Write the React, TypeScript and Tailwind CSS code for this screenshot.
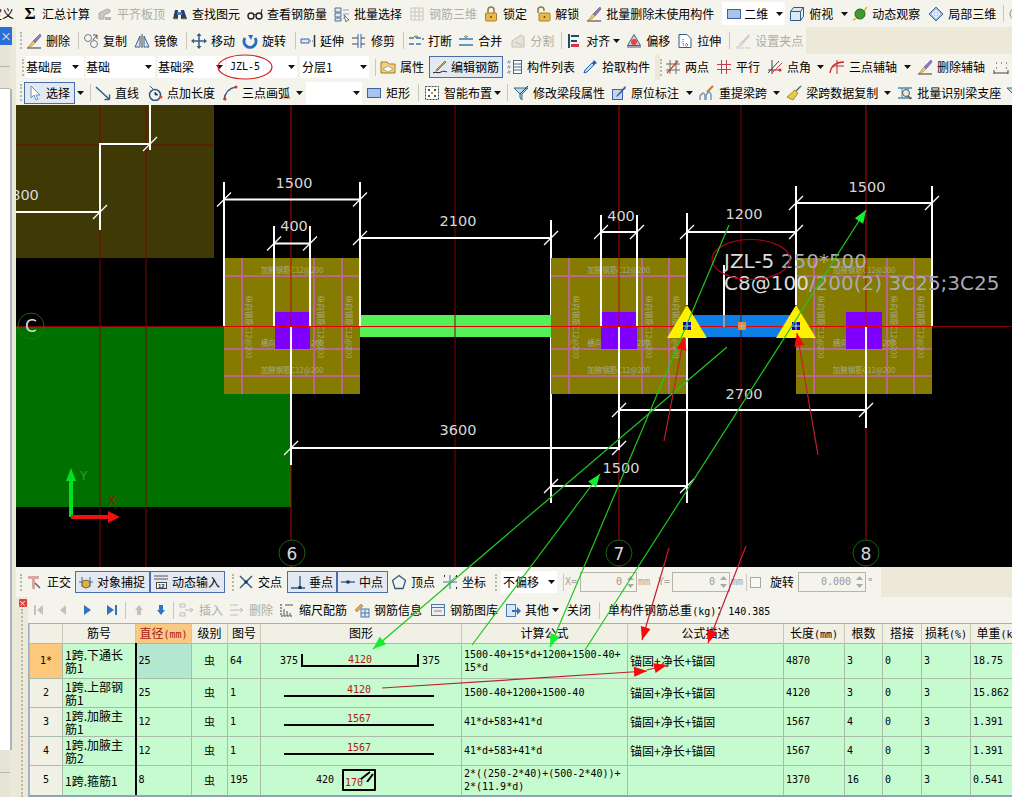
import type { ReactNode } from "react";
import clsx from "clsx";

const Ic = ({ children, w = 16 }: { children: ReactNode; w?: number }) => (
  <svg width={w} height={16} viewBox={`0 0 ${w} 16`} className="shrink-0 block">
    {children}
  </svg>
);

// toolbar icons
const icons: Record<string, ReactNode> = {
  sigma: <span className="block w-4 text-center font-['Liberation_Serif',serif] text-[17px] font-bold leading-4">Σ</span>,
  flat: <Ic><path d="M2 13V7l8-4 3 1v2l-6 3v4z" fill="#c9c9c0" stroke="#a8a89c" /><path d="M8 14h6v-3H8z" fill="#b5b5aa" /></Ic>,
  find: <Ic><path d="M1 13l2-9h3v9zM9 13V4h3l3 9z" fill="#27406e" /><path d="M5 6h5v3H5z" fill="#5579b5" /><path d="M2 13h4M10 13h4" stroke="#c9a227" /></Ic>,
  glasses: <Ic><circle cx="4" cy="10" r="3" fill="none" stroke="#222" strokeWidth="1.4" /><circle cx="12" cy="10" r="3" fill="none" stroke="#222" strokeWidth="1.4" /><path d="M7 9c1-1 1-1 2 0M14 9l1-6" stroke="#222" fill="none" /></Ic>,
  batch: <Ic><path d="M1 2h6v4H1zM1 7h6v4H1zM1 12h6v3H1z" fill="#dfe7f4" stroke="#54708f" /><path d="M9 4h6M9 8h6M9 12h3" stroke="#8fa2b8" /><path d="M10 9l5 5-2 .3-1 1.7z" fill="#fff" stroke="#444" strokeWidth=".7" /></Ic>,
  grid: <Ic><path d="M2 2h12v12H2zM6 2v12M10 2v12M2 6h12M2 10h12" fill="none" stroke="#c6c6ba" /></Ic>,
  lock: <Ic><path d="M5 7V4a3 3 0 0 1 6 0v3" fill="none" stroke="#8a7a4a" strokeWidth="1.5" /><rect x="2.5" y="7" width="11" height="8" rx="1" fill="#e9b949" stroke="#a8802a" /><path d="M8 10v2" stroke="#6a4a10" strokeWidth="1.5" /></Ic>,
  unlock: <Ic><path d="M3 7V4a3 3 0 0 1 6 0v1" fill="none" stroke="#8a7a4a" strokeWidth="1.5" /><rect x="4" y="7" width="11" height="8" rx="1" fill="#e9b949" stroke="#a8802a" /><path d="M9.5 10v2" stroke="#6a4a10" strokeWidth="1.5" /></Ic>,
  brush: <Ic><path d="M14 1L7 8l2 2 6-7z" fill="#8c7ac4" stroke="#5c4a94" strokeWidth=".6" /><path d="M7 8l2 2-3 3-4 1c2-1 2-3 5-6z" fill="#e8c95c" stroke="#a08020" strokeWidth=".5" /><path d="M1 15h14" stroke="#333" /></Ic>,
  brushGrey: <Ic><path d="M14 1L7 8l2 2 6-7z" fill="#cfcfc6" /><path d="M7 8l2 2-3 3-4 1c2-1 2-3 5-6z" fill="#deded5" stroke="#bbb" strokeWidth=".5" /><path d="M1 15h14" stroke="#bbb" strokeDasharray="2 1" /></Ic>,
  plane: <Ic><rect x="1.500" y="3.500" width="13" height="9" fill="#a9c3ea" stroke="#3a62a8" /></Ic>,
  cube: <Ic><path d="M1.500 5.500h10v9h-10zM1.500 5.500l3-4h10l-3 4M11.500 14.500l3-4v-9" fill="#dbe9f5" stroke="#2f5c80" /></Ic>,
  orbit: <Ic><path d="M1 14c3-1 11-8 14-13" stroke="#d9b92a" strokeWidth="1.5" fill="none" /><circle cx="8" cy="8" r="5" fill="#3f9a36" stroke="#1f6a20" /></Ic>,
  local: <Ic><path d="M8 1l7 7-7 7-7-7z" fill="#9dbbe0" stroke="#466c9c" /><path d="M4 8l4-4 4 4-4 4zM8 4v8M4 8h8" fill="none" stroke="#fff" /></Ic>,
  circle: <Ic><circle cx="8" cy="8" r="6" fill="none" stroke="#888" /><path d="M8 4v8M4 8h8" stroke="#888" /></Ic>,
  copy: <Ic><circle cx="5" cy="5" r="3.500" fill="none" stroke="#6a7f96" /><circle cx="11" cy="11" r="3.500" fill="none" stroke="#6a7f96" /><path d="M10 2l4 0 0 4M10 7l4-5" stroke="#555" fill="none" /></Ic>,
  mirror: <Ic><path d="M8 1v14" stroke="#444" /><path d="M6 3v11H1zM10 3v11h5z" fill="#dfe7f2" stroke="#3d5f8d" /></Ic>,
  move: <Ic><path d="M8 1v14M1 8h14" stroke="#345d8c" strokeWidth="1.500" /><path d="M8 0l2.500 3h-5zM8 16l2.500-3h-5zM0 8l3-2.500v5zM16 8l-3-2.500v5z" fill="#345d8c" /></Ic>,
  rotate: <Ic><path d="M3 5a6 6 0 1 0 10 0" fill="none" stroke="#2c6bc0" strokeWidth="3" /><path d="M6 2l5 0-2 5z" fill="#2c6bc0" /></Ic>,
  extend: <Ic><path d="M1 6h8v4H1z" fill="#dbe7f5" stroke="#3a62a8" /><path d="M10 8h3" stroke="#3a62a8" strokeDasharray="1 1" /><path d="M14.500 2v12" stroke="#333" strokeWidth="1.500" /></Ic>,
  trim: <Ic><path d="M7 1v14M10 1v14" stroke="#3a62a8" /><path d="M1 5h6M1 11h6M10 5h4M10 11h4" stroke="#444" /></Ic>,
  breakIc: <Ic><path d="M1 5h14v2M1 11h14" fill="none" stroke="#3a78a8" strokeWidth="1.500" strokeDasharray="5 2" /><path d="M8 2v3M6 3l2 2 2-2" stroke="#8a7a30" fill="none" /></Ic>,
  merge: <Ic><path d="M1 6h14M1 12h14" stroke="#3a78a8" strokeWidth="1.500" /><path d="M8 2v3M6 3l2 2 2-2" stroke="#888" fill="none" /></Ic>,
  split: <Ic><path d="M2 14V8l9-6 3 2v10z" fill="#e4e4da" stroke="#c2c2b6" /><path d="M5 9l7 3" stroke="#c2c2b6" /></Ic>,
  align: <Ic><path d="M3 1v14" stroke="#26476e" strokeWidth="2" /><path d="M5 3h8M5 8h6" stroke="#26476e" strokeWidth="2" /><path d="M5 11h8v3H5z" fill="#d8334a" /></Ic>,
  offset: <Ic><path d="M8 1.500l6.500 11h-13z" fill="#f2c4c4" stroke="#3d5f8d" /><circle cx="8" cy="9" r="3" fill="#d84a4a" /><path d="M1 14h14" stroke="#3d5f8d" /></Ic>,
  stretch: <Ic><path d="M2 1.500h8l4 4v9H2z" fill="#fff" stroke="#2f5c80" /><path d="M6 6v6M6 12h5M9 10l2 2-2 2" stroke="#2f5c80" fill="none" strokeDasharray="1 1" /></Ic>,
  props: <Ic><path d="M1 3h6l2 2h6v9H1z" fill="#f0d27a" stroke="#a87820" /><path d="M3 10l5-3 5 3-5 3z" fill="#fff" stroke="#666" strokeWidth=".5" /></Ic>,
  pen: <Ic><path d="M13 2L5 10l-1 2 2-1 8-8z" fill="#c8a84a" stroke="#5c4a20" strokeWidth=".6" /><path d="M1 14c3-2 5 1 8-1 2-1 4-1 6 0" stroke="#222" fill="none" /></Ic>,
  list: <Ic><path d="M1 2h2v2H1zM1 7h2v2H1zM1 12h2v2H1z" fill="none" stroke="#4a6a8a" strokeDasharray="1 1" /><rect x="6.500" y="1.500" width="8" height="13" fill="#fff" stroke="#4a6a8a" /><path d="M7 5h7M7 8h7M7 11h7" stroke="#4a6a8a" /></Ic>,
  dropper: <Ic><path d="M2 14l1-3 7-7 2 2-7 7z" fill="#bcd9f5" stroke="#2862a8" /><path d="M10 4l2-3 3 3-3 2z" fill="#2862a8" /></Ic>,
  twoPt: <Ic><path d="M1 5h14M1 11h14M5 1v14M11 1v14" stroke="#6a6a6a" /><path d="M2 14L13 2" stroke="#c83a2a" strokeWidth="1.200" /></Ic>,
  parallel: <Ic><path d="M1 5.500h14M1 10.500h14M5.500 1v14M10.500 1v14" stroke="#c83a4a" /></Ic>,
  angle: <Ic><path d="M1 11h11M5 1v14M1 14L12 2" stroke="#444" /><path d="M5 14L15 4" stroke="#c83a4a" /><circle cx="13" cy="11" r="1.500" fill="#d8212a" /></Ic>,
  arcAxis: <Ic><path d="M1 14C2 7 7 3 15 3" fill="none" stroke="#c82a2a" strokeWidth="1.300" /><path d="M8 1v14M4 7h11" stroke="#c82a2a" /></Ic>,
  dim: <Ic><path d="M1 14h14M1 11v4M15 11v4" stroke="#444" /><path d="M3 4h1M8 4h1M13 4h1M3 9h1M13 9h1" stroke="#333" /></Ic>,
  cursor: <Ic><path d="M4 1v12l3-3 2 5 2-1-2-4h4z" fill="#fff" stroke="#6a8fb5" /></Ic>,
  line: <Ic><path d="M1 2l13 12" stroke="#2f5c80" strokeWidth="1.500" /><path d="M14.500 14.500v-5M14.500 14.500h-5" stroke="#2f5c80" strokeWidth="1.500" /></Ic>,
  ptLen: <Ic><circle cx="8" cy="10" r="5.500" fill="none" stroke="#2f5c80" strokeWidth="1.500" /><path d="M8 7v3h3M3 1l3 3" stroke="#2f5c80" /><circle cx="14" cy="12" r="1.500" fill="#d84a2a" /></Ic>,
  arc: <Ic><path d="M2 15C3 8 7 3 14 2" fill="none" stroke="#2f5c80" strokeWidth="1.500" /><circle cx="14" cy="2" r="1.500" fill="#c83a2a" /><circle cx="3" cy="14" r="1.500" fill="#c83a2a" /></Ic>,
  smart: <Ic><rect x="1.500" y="1.500" width="13" height="13" fill="#fff" stroke="#444" strokeDasharray="2 1" /><path d="M4 4h2v2H4zM10 4h2v2h-2zM4 10h2v2H4zM10 10h2v2h-2z" fill="#2a6a40" /><path d="M7 7h2v2H7z" fill="#c8901a" /></Ic>,
  funnel: <Ic><path d="M1 3h14L9 9v6l-2-2V9z" fill="#bcd9e8" stroke="#2f6c80" /><path d="M15 1L7 9" stroke="#333" /></Ic>,
  edit: <Ic><rect x="1.500" y="4.500" width="10" height="10" fill="#c7d6ee" stroke="#3a62a8" /><path d="M14 1L6 10l-1 2 2-1 8-8z" fill="#3a62a8" /></Ic>,
  span: <Ic><path d="M1 15V11c3-4 4-4 5 0v4M7 15V10c3-4 4-4 5 0v5" fill="none" stroke="#7a9ac0" strokeWidth="1.500" /><path d="M14 1L8 7" stroke="#c87a2a" strokeWidth="2" /></Ic>,
  broom: <Ic><path d="M15 1L9 7" stroke="#666" strokeWidth="1.500" /><path d="M9 5l3 3-5 7-6-3z" fill="#eccb4a" stroke="#a88820" /></Ic>,
  batchId: <Ic><path d="M1 3h14M1 13h14" stroke="#4a8ab8" strokeWidth="1.500" /><path d="M5 3v10M11 3v10" stroke="#4a8ab8" /><circle cx="9" cy="8" r="3.500" fill="#e8e8d8" stroke="#555" /><path d="M11 11l3 3" stroke="#555" strokeWidth="1.500" /></Ic>,
  ortho: <Ic><path d="M1 2h11v3H8v10H5V5H1z" fill="#d8a8a0" /><path d="M8 9l5 5" stroke="#667" strokeWidth="1.500" /></Ic>,
  snap: <Ic><path d="M1 8h3M12 8h3M4 3v10M12 3v10" stroke="#3a62a8" /><circle cx="8" cy="10" r="4" fill="#d8b34a" stroke="#8a6a1a" /></Ic>,
  dyn: <Ic><path d="M1 2h14M1 5h14" stroke="#555" /><rect x="3.500" y="8.500" width="10" height="6" fill="#fff" stroke="#444" /><text x="5" y="14" fontSize="6" fontFamily="Liberation Sans" fontWeight="700" fill="#222">12</text></Ic>,
  cross: <Ic><path d="M2 2l12 12M14 2L2 14" stroke="#345d8c" strokeWidth="1.500" /><path d="M6 8l2-2 2 2-2 2z" fill="#14305c" /></Ic>,
  perp: <Ic><path d="M1 14h14M10 2v12" stroke="#2f5c80" strokeWidth="1.300" /><rect x="8.500" y="12" width="3" height="3" fill="#14305c" /></Ic>,
  mid: <Ic><path d="M1 8h14" stroke="#2f5c80" strokeWidth="1.300" /><rect x="6.500" y="6.500" width="3" height="3" fill="#14305c" /></Ic>,
  vertex: <Ic><path d="M8 1.500l6.500 5-2.500 8H4l-2.500-8z" fill="none" stroke="#2f5c80" strokeWidth="1.300" /></Ic>,
  coord: <Ic><path d="M8 1v14M1 8h14" stroke="#3a78a8" /><path d="M2 14L14 2" stroke="#c8a02a" /><path d="M2 2h1M14 14h1M2 14h1M14 2h1" stroke="#222" strokeWidth="2" /></Ic>,
  insert: <Ic><path d="M1 2h5v3H1zM1 11h5v3H1zM6 8h8M11 6l3 2-3 2" fill="none" stroke="#bdbdb2" /></Ic>,
  remove: <Ic><path d="M1 3h8M1 8h8M1 13h8M9 8h5M11 6l3 2-3 2" fill="none" stroke="#bdbdb2" /></Ic>,
  scale: <Ic><path d="M2 2v12h12" fill="none" stroke="#333" strokeDasharray="2 1" /><path d="M5 14V7M8 14V9M11 14v-3M6 3h8" stroke="#555" /></Ic>,
  info: <Ic><path d="M1 8l6-6 2 2-6 6z" fill="#d8a85a" stroke="#8a6a2a" strokeWidth=".5" /><rect x="7" y="7" width="8" height="8" fill="#dbe7f5" stroke="#4a7aaa" /><path d="M11 7v8M7 11h8" stroke="#4a7aaa" /></Ic>,
  lib: <Ic><rect x="1.500" y="2.500" width="13" height="11" fill="#e8f0fa" stroke="#4a7aaa" /><path d="M1 5.500h14" stroke="#4a7aaa" /><path d="M4 9h8" stroke="#c8752a" /></Ic>,
  other: <Ic><rect x="1.500" y="2.500" width="9" height="12" fill="#dbe7f5" stroke="#4a7aaa" /><path d="M7 8h5V5l4 4-4 4v-3H7z" fill="#2f74c0" /></Ic>,
};

const Arrow = ({ className }: { className?: string }) => (
  <svg width="7" height="4" viewBox="0 0 7 4" className={clsx("shrink-0 block", className)}>
    <path d="M0 0h7L3.500 4z" fill="#111" />
  </svg>
);
const Sep = ({ className }: { className?: string }) => <div className={clsx("w-px h-[17px] bg-[#c9c8bb] shrink-0", className)} />;
const Grip = ({ className }: { className?: string }) => <div className={clsx("w-[2px] h-[17px] border-l-2 border-dotted border-[#b9b8a8] shrink-0", className)} />;

const T = ({ i, children, grey, className }: { i: string; children: ReactNode; grey?: boolean; className?: string }) => (
  <div className={clsx("flex items-center gap-[4px] shrink-0 whitespace-nowrap", grey && "text-[#adada2]", className)}>
    {icons[i]}
    <span>{children}</span>
  </div>
);

const Active = ({ i, children, className }: { i: string; children: ReactNode; className?: string }) => (
  <div className={clsx("flex items-center gap-[3px] h-[22px] pl-[2px] shrink-0 border border-[#4a6ea9] bg-[#e3e9f2] whitespace-nowrap", className)}>
    {icons[i]}
    <span>{children}</span>
  </div>
);

const Sel = ({ children, className, mono }: { children?: ReactNode; className?: string; mono?: boolean }) => (
  <div className={clsx("flex items-center justify-between h-[22px] bg-white shrink-0", mono && "font-['DejaVu_Sans_Mono',monospace] text-[10px]", className)}>
    <span>{children}</span>
  </div>
);

const Spin = ({ value, className }: { value: string; className?: string }) => (
  <div className={clsx("flex items-center justify-end gap-[5px] h-[20px] border border-[#b5b5a8] font-['DejaVu_Sans_Mono',monospace] text-[10px] text-[#9a9a90] shrink-0", className)}>
    <span>{value}</span>
    <div className="flex flex-col gap-[4px] pr-[2px]">
      <svg width="7" height="4" viewBox="0 0 7 4" className="block"><path d="M0 4h7L3.500 0z" fill="#aaa" /></svg>
      <svg width="7" height="4" viewBox="0 0 7 4" className="block"><path d="M0 0h7L3.500 4z" fill="#aaa" /></svg>
    </div>
  </div>
);

const W = "#ffffff";
const Tick = ({ x, y }: { x: number; y: number }) => <line x1={x - 7} y1={y + 7} x2={x + 7} y2={y - 7} stroke={W} strokeWidth="1.200" />;
const HDim = ({ a, b, y }: { a: number; b: number; y: number }) => (
  <>
    <line x1={a} y1={y} x2={b} y2={y} stroke={W} strokeWidth="2" />
    <Tick x={a} y={y} />
    <Tick x={b} y={y} />
  </>
);
const VL = ({ x, a, b, c = W, w = 2 }: { x: number; a: number; b: number; c?: string; w?: number }) => <line x1={x} y1={a} x2={x} y2={b} stroke={c} strokeWidth={w} />;
const Num = ({ x, y, children, size = 14.500 }: { x: number; y: number; children: ReactNode; size?: number }) => (
  <text x={x} y={y} fontSize={size} textAnchor="middle" fontFamily="DejaVu Sans" fill="#d8d8d8">{children}</text>
);

const Footing = ({ x, w, v }: { x: number; w: number; v: number[] }) => (
  <>
    <rect x={x} y={258} width={w} height={136} fill="#847b00" />
    {[276, 349, 376].map((y) => <line key={y} x1={x} y1={y} x2={x + w} y2={y} stroke="#b9688c" strokeWidth="2" />)}
    {v.map((vx) => <line key={vx} x1={vx} y1={258} x2={vx} y2={394} stroke="#b9688c" strokeWidth="2" />)}
    <g fontSize="7.500" fill="#a9a98c" fontFamily="Noto Sans CJK SC" textAnchor="middle">
      <text x={x + w / 2} y={273}>加腋钢筋C12@200</text>
      <text x={x + w / 2} y={346}>横向钢筋C12@200</text>
      <text x={x + w / 2} y={373}>加腋钢筋C12@200</text>
      {v.map((vx) => <text key={vx} transform={`translate(${vx + 4} 327) rotate(90)`}>纵向钢筋C12@200</text>)}
    </g>
  </>
);

const Support = ({ x }: { x: number }) => (
  <>
    <path d={`M${x} 305L${x + 20} 338H${x - 20}z`} fill="#fff000" />
    <rect x={x - 4} y={322} width={8} height={8} fill="#0a0ab0" />
    <path d={`M${x} 322v8M${x - 4} 326h8`} stroke="#fff" strokeWidth=".8" />
  </>
);

const AxisMark = ({ x, y, t, r = 13 }: { x: number; y: number; t: string; r?: number }) => (
  <>
    <circle cx={x} cy={y} r={r} fill="#000" stroke="#1a7a1a" strokeWidth=".8" />
    <Num x={x} y={y + 6.500} size={17}>{t}</Num>
  </>
);

const Canvas = () => (
  <svg viewBox="16 105 996 462" className="block w-[996px] h-[462px] bg-black">
    <rect x={16} y={105} width={198} height={153} fill="#3f3a05" />
    <rect x={16} y={327} width={275} height={180} fill="#007000" />
    <VL x={551} a={220} b={503} />
    <Footing x={224} w={136} v={[242, 314, 342]} />
    <Footing x={551} w={135} v={[569, 642, 669]} />
    <Footing x={796} w={136} v={[814, 887, 914]} />
    <rect x={360} y={315} width={191} height={22} fill="#55f055" />
    <rect x={694} y={315} width={96} height={22} fill="#0f7fe8" />
    <rect x={275} y={312} width={35} height={37} fill="#7f00ff" />
    <rect x={601} y={312} width={36} height={37} fill="#7f00ff" />
    <rect x={846} y={312} width={36} height={37} fill="#7f00ff" />
    {/* axes */}
    <line x1={16} y1={145} x2={214} y2={145} stroke="#6a0808" />
    <line x1={16} y1={326.500} x2={1012} y2={326.500} stroke="#8b0000" />
    <line x1={224} y1={326.500} x2={932} y2={326.500} stroke="#e00000" />
    {[100, 146, 455, 741].map((x) => <VL key={x} x={x} a={105} b={567} c="#7a0606" w={1} />)}
    {[291, 619, 866].map((x) => <VL key={x} x={x} a={105} b={567} c="#b80808" w={1} />)}
    <rect x={738} y={322} width={8} height={8} fill="#e88a30" />
    <path d="M742 322v8M738 326h8" stroke="#a0c8e0" strokeWidth=".8" />
    <Support x={687} />
    <Support x={796} />
    {/* dimensions */}
    <VL x={150} a={105} b={150} />
    <VL x={100} a={143} b={230} />
    <line x1={100} y1={144} x2={150} y2={144} stroke={W} strokeWidth="2" />
    <line x1={16} y1={212} x2={100} y2={212} stroke={W} strokeWidth="2" />
    <Tick x={100} y={212} />
    <Tick x={150} y={144} />
    <Num x={25} y={200}>800</Num>

    <VL x={224} a={182} b={326} />
    <VL x={360} a={182} b={326} />
    <HDim a={224} b={360} y={199.500} />
    <Num x={294} y={188}>1500</Num>
    <VL x={274} a={226} b={326} />
    <VL x={310} a={226} b={326} />
    <HDim a={274} b={310} y={243.500} />
    <Num x={294} y={231}>400</Num>
    <HDim a={360} b={551} y={238} />
    <Num x={458} y={226}>2100</Num>

    <VL x={601} a={215} b={326} />
    <VL x={637} a={215} b={326} />
    <HDim a={601} b={637} y={232} />
    <Num x={621} y={221}>400</Num>
    <VL x={687} a={213} b={305} />
    <VL x={796} a={186} b={305} />
    <HDim a={687} b={796} y={232} />
    <Num x={744} y={219}>1200</Num>
    <VL x={932} a={186} b={326} />
    <HDim a={796} b={932} y={203} />
    <Num x={867} y={192}>1500</Num>
    <VL x={724} a={265} b={315} />
    <VL x={724} a={315} b={327} c="#9a9a9a" />

    <VL x={291} a={327} b={465} />
    <HDim a={291} b={619} y={448} />
    <Num x={458} y={435}>3600</Num>
    <VL x={619} a={327} b={450} />
    <VL x={687} a={338} b={503} />
    <HDim a={551} b={687} y={486} />
    <Num x={621} y={473}>1500</Num>
    <VL x={866} a={327} b={428} />
    <HDim a={619} b={866} y={410} />
    <Num x={744} y={399}>2700</Num>

    {/* beam label */}
    <g fontSize="20" fontFamily="DejaVu Sans" fill="#dcdcdc">
      <text x={724} y={268}>JZL-5 <tspan fill="#a9a9b8">250*500</tspan></text>
      <text x={724} y={290}>C8@100<tspan fill="#a9a9b8">/200(2) 3C25;3C25</tspan></text>
    </g>
    <ellipse cx={751} cy={259.500} rx={39} ry={20} fill="none" stroke="#b00018" strokeWidth="1.200" />

    <AxisMark x={292} y={553} t="6" />
    <AxisMark x={619} y={553} t="7" />
    <AxisMark x={866} y={553} t="8" />
    <text x={31} y={332} fontSize="17" textAnchor="middle" fontFamily="DejaVu Sans" fill="#d8d8d8">C</text>
    <circle cx={31} cy={326} r={13} fill="none" stroke="#1a7a1a" strokeWidth=".8" />

    {/* ucs */}
    <path d="M71 468l5 13h-3v36h-4v-36h-3z" fill="#00e020" />
    <path d="M71 515h37v-4l12 6-12 6v-4H71z" fill="#f01010" />
    <text x={80} y={480} fontSize="12" fontFamily="DejaVu Sans" fill="#20a040">Y</text>
    <text x={108} y={505} fontSize="12" fontFamily="DejaVu Sans" fill="#a01010">X</text>
  </svg>
);

// green and red notes someone drew on top of the screenshot
const Head = ({ tip, from, c }: { tip: [number, number]; from: [number, number]; c: string }) => {
  const dx = from[0] - tip[0];
  const dy = from[1] - tip[1];
  const l = Math.hypot(dx, dy);
  const ux = dx / l;
  const uy = dy / l;
  const bx = tip[0] + ux * 13;
  const by = tip[1] + uy * 13;
  return <polygon points={`${tip[0]},${tip[1]} ${bx - uy * 5},${by + ux * 5} ${bx + uy * 5},${by - ux * 5}`} fill={c} />;
};

const Arw = ({ from, tip, kind }: { from: [number, number]; tip: [number, number]; kind: "g" | "r" }) => (
  <>
    <line x1={from[0]} y1={from[1]} x2={tip[0]} y2={tip[1]} stroke={kind === "g" ? "#20c820" : "#c02030"} strokeWidth="1.200" />
    <Head tip={tip} from={from} c={kind === "g" ? "#10f030" : "#f80808"} />
  </>
);

const Notes = () => (
  <svg width="1012" height="797" viewBox="0 0 1012 797" className="absolute inset-0 pointer-events-none">
    <Arw kind="g" from={[727, 347]} tip={[373, 649]} />
    <Arw kind="g" from={[729, 225]} tip={[550, 647]} />
    <Arw kind="g" from={[585, 650]} tip={[866, 210]} />
    <Arw kind="g" from={[472, 645]} tip={[600, 474]} />
    <Arw kind="r" from={[664, 441]} tip={[684, 337]} />
    <Arw kind="r" from={[818, 455]} tip={[797, 333]} />
    <Arw kind="r" from={[669, 548]} tip={[642, 640]} />
    <Arw kind="r" from={[746, 546]} tip={[708, 643]} />
    <Arw kind="r" from={[382, 688]} tip={[647, 671]} />
    <Arw kind="r" from={[647, 670]} tip={[667, 665]} />
  </svg>
);

const mono = "font-['DejaVu_Sans_Mono',monospace] text-[10px]";
const cols = [33, 73, 56, 36, 33, 201, 166, 156, 61, 38, 39, 49, 60];
const headers: ReactNode[] = [
  "",
  "筋号",
  <>直径<span className={mono}>(mm)</span></>,
  "级别",
  "图号",
  "图形",
  "计算公式",
  "公式描述",
  <>长度<span className={mono}>(mm)</span></>,
  "根数",
  "搭接",
  <>损耗<span className={mono}>(%)</span></>,
  <>单重<span className={mono}>(kg)</span></>,
];

const Bar = ({ t }: { t: string }) => (
  <div className={clsx("w-[150px] ml-[23px] mb-[5px] border-b-2 border-black text-center text-[#b01818] leading-[11px]", mono)}>{t}</div>
);

const rows = [
  {
    h: "h-[35px]", id: "1*", name: <>1跨.下通长<br />筋1</>, dia: "25", code: "64", total: "4870", n: "3", unit: "18.75",
    shape: (
      <div className={clsx("flex items-center pl-[19px] gap-[3px]", mono)}>
        <span>375</span>
        <div className="w-[118px] h-[13px] border-x-2 border-b-2 border-black text-center text-[#b01818] leading-[11px]">4120</div>
        <span>375</span>
      </div>
    ),
    calc: <>1500-40+15*d+1200+1500-40+<br />15*d</>, desc: "锚固+净长+锚固",
  },
  { h: "h-[29px]", id: "2", name: <>1跨.上部钢<br />筋1</>, dia: "25", code: "1", total: "4120", n: "3", unit: "15.862", shape: <Bar t="4120" />, calc: "1500-40+1200+1500-40", desc: "锚固+净长+锚固" },
  { h: "h-[29px]", id: "3", name: <>1跨.加腋主<br />筋1</>, dia: "12", code: "1", total: "1567", n: "4", unit: "1.391", shape: <Bar t="1567" />, calc: "41*d+583+41*d", desc: "锚固+净长+锚固" },
  { h: "h-[29px]", id: "4", name: <>1跨.加腋主<br />筋2</>, dia: "12", code: "1", total: "1567", n: "4", unit: "1.391", shape: <Bar t="1567" />, calc: "41*d+583+41*d", desc: "锚固+净长+锚固" },
  {
    h: "h-[30px]", id: "5", name: "1跨.箍筋1", dia: "8", code: "195", total: "1370", n: "16", unit: "0.541",
    shape: (
      <div className={clsx("flex items-center pl-[55px] gap-[8px]", mono)}>
        <span>420</span>
        <div className="relative w-[34px] h-[22px] border-2 border-black rounded-[1px] text-[#b01818] leading-[24px] pl-px">
          170
          <svg width="14" height="12" viewBox="0 0 14 12" className="absolute -top-[1px] right-0">
            <path d="M1 9l9-7M7 12l6-8" stroke="#000" strokeWidth="2" />
          </svg>
        </div>
      </div>
    ),
    calc: <>2*((250-2*40)+(500-2*40))+<br />2*(11.9*d)</>, desc: "",
  },
];

const td = "border border-[#a9bcaa] overflow-hidden whitespace-nowrap";

const App = () => (
  <div className="relative w-[1012px] h-[797px] overflow-hidden bg-[#ece9d8] text-[12px] leading-none text-black font-['Noto_Sans_CJK_SC','Liberation_Sans',sans-serif]">
    {/* row 1 */}
    <div className="flex items-center h-[27px] bg-[#f5f4ec]">
      <span className="-ml-[10px] shrink-0">定义</span>
      <T i="sigma" className="ml-[8px]">汇总计算</T>
      <T i="flat" grey className="ml-[7px]">平齐板顶</T>
      <T i="find" className="ml-[7px]">查找图元</T>
      <T i="glasses" className="ml-[7px]">查看钢筋量</T>
      <T i="batch" className="ml-[7px]">批量选择</T>
      <T i="grid" grey className="ml-[7px]">钢筋三维</T>
      <T i="lock" className="ml-[6px]">锁定</T>
      <T i="unlock" className="ml-[8px]">解锁</T>
      <T i="brush" className="ml-[7px]">批量删除未使用构件</T>
      <div className="flex items-center w-[63px] h-[23px] ml-[8px] pl-[4px] bg-white shrink-0">
        {icons.plane}
        <span className="ml-[2px]">二维</span>
        <Arrow className="ml-[8px]" />
      </div>
      <T i="cube" className="ml-[4px]">俯视</T>
      <Arrow className="ml-[8px]" />
      <T i="orbit" className="ml-[4px]">动态观察</T>
      <T i="local" className="ml-[8px]">局部三维</T>
      <Sep className="ml-[7px]" />
      <div className="ml-[4px] shrink-0">{icons.circle}</div>
    </div>

    <div className="flex">
      {/* left dock strip */}
      <div className="flex flex-col w-[16px] h-[770px] shrink-0">
        <div className="flex items-center justify-center w-[12px] h-[18px] bg-[#2a6fd6] text-white text-[11px]">×</div>
        <div className="w-[10px] h-[22px] bg-[#e6e4d6] border-b border-[#b8b7a8]" />
        <div className="w-[10px] h-[22px] bg-[#e6e4d6] border-b border-[#b8b7a8]" />
        <div className="w-[12px] h-[661px] bg-white border-r-2 border-[#a8b6c4]" />
        <div className="w-[10px] h-[23px] bg-[#e6e4d6] border-b border-[#b8b7a8]" />
        <div className="w-[10px] h-[24px] bg-[#e6e4d6]" />
      </div>

      <div className="flex flex-col w-[996px] shrink-0">
        {/* row 2 */}
        <div className="flex items-center h-[27px]">
          <div className="flex items-center h-full w-[790px] shrink-0 bg-[#f5f4ec]">
            <Grip className="ml-[4px]" />
            <T i="brush" className="ml-[4px]">删除</T>
            <Sep className="ml-[8px]" />
            <T i="copy" className="ml-[4px]">复制</T>
            <T i="mirror" className="ml-[7px]">镜像</T>
            <Sep className="ml-[8px]" />
            <T i="move" className="ml-[4px]">移动</T>
            <T i="rotate" className="ml-[7px]">旋转</T>
            <Sep className="ml-[9px]" />
            <T i="extend" className="ml-[4px]">延伸</T>
            <T i="trim" className="ml-[7px]">修剪</T>
            <Sep className="ml-[8px]" />
            <T i="breakIc" className="ml-[4px]">打断</T>
            <T i="merge" className="ml-[6px]">合并</T>
            <T i="split" grey className="ml-[8px]">分割</T>
            <Sep className="ml-[7px]" />
            <T i="align" className="ml-[4px]">对齐</T>
            <Arrow className="ml-[3px]" />
            <T i="offset" className="ml-[6px]">偏移</T>
            <T i="stretch" className="ml-[7px]">拉伸</T>
            <Sep className="ml-[8px]" />
            <T i="brushGrey" grey className="ml-[5px]">设置夹点</T>
          </div>
        </div>

        {/* row 3 */}
        <div className="flex items-center h-[26px] bg-[#f5f4ec]">
          <Grip className="ml-[6px]" />
          <Sel className="ml-[2px] w-[58px]">基础层</Sel>
          <Arrow className="-ml-[12px]" />
          <Sel className="ml-[7px] w-[69px]">基础</Sel>
          <Arrow className="-ml-[10px]" />
          <Sel className="ml-[6px] w-[67px]">基础梁</Sel>
          <Arrow className="-ml-[9px]" />
          <Sel mono className="ml-[4px] w-[70px] pl-[3px]">JZL-5</Sel>
          <Arrow className="-ml-[9px]" />
          <Sel className="ml-[5px] w-[69px] pl-[2px]">分层1</Sel>
          <Arrow className="-ml-[9px]" />
          <Sep className="ml-[8px]" />
          <T i="props" className="ml-[4px]">属性</T>
          <Active i="pen" className="ml-[5px] w-[74px]">编辑钢筋</Active>
          <T i="list" className="ml-[4px]">构件列表</T>
          <T i="dropper" className="ml-[7px]">拾取构件</T>
          <div className="w-[5px] h-full ml-[5px] bg-[#ece9d8] shrink-0" />
          <Grip />
          <T i="twoPt" className="ml-[3px]">两点</T>
          <T i="parallel" className="ml-[7px]">平行</T>
          <T i="angle" className="ml-[7px]">点角</T>
          <Arrow className="ml-[6px]" />
          <T i="arcAxis" className="ml-[5px]">三点辅轴</T>
          <Arrow className="ml-[7px]" />
          <T i="brush" className="ml-[6px]">删除辅轴</T>
          <div className="ml-[8px] shrink-0">{icons.dim}</div>
        </div>

        {/* row 4 */}
        <div className="flex items-center h-[25px] bg-[#f5f4ec]">
          <Grip className="ml-[4px]" />
          <Active i="cursor" className="ml-[2px] w-[51px]">选择</Active>
          <Arrow className="ml-[2px]" />
          <Sep className="ml-[6px]" />
          <T i="line" className="ml-[4px]">直线</T>
          <T i="ptLen" className="ml-[8px]">点加长度</T>
          <T i="arc" className="ml-[7px]">三点画弧</T>
          <Arrow className="ml-[6px]" />
          <Sel className="ml-[3px] w-[56px]" />
          <Arrow className="-ml-[9px]" />
          <T i="plane" className="ml-[6px]">矩形</T>
          <Sep className="ml-[8px]" />
          <T i="smart" className="ml-[5px]">智能布置</T>
          <Arrow className="ml-[2px]" />
          <Sep className="ml-[6px]" />
          <T i="funnel" className="ml-[5px]">修改梁段属性</T>
          <T i="edit" className="ml-[6px]">原位标注</T>
          <Arrow className="ml-[7px]" />
          <T i="span" className="ml-[6px]">重提梁跨</T>
          <Arrow className="ml-[6px]" />
          <T i="broom" className="ml-[6px]">梁跨数据复制</T>
          <Arrow className="ml-[6px]" />
          <T i="batchId" className="ml-[6px]">批量识别梁支座</T>
          <div className="ml-[5px] shrink-0">{icons.funnel}</div>
        </div>

        <Canvas />

        {/* snap bar */}
        <div className="flex items-center h-[30px]">
          <div className="flex items-center h-full w-[865px] shrink-0 bg-[#f5f4ec]">
            <Grip className="ml-[4px]" />
            <T i="ortho" className="ml-[5px]">正交</T>
            <Active i="snap" className="ml-[4px] w-[75px]">对象捕捉</Active>
            <Active i="dyn" className="w-[75px]">动态输入</Active>
            <Grip className="ml-[7px]" />
            <T i="cross" className="ml-[4px]">交点</T>
            <Active i="perp" className="ml-[5px] w-[50px]">垂点</Active>
            <Active i="mid" className="w-[51px]">中点</Active>
            <T i="vertex" className="ml-[3px]">顶点</T>
            <T i="coord" className="ml-[7px]">坐标</T>
            <Grip className="ml-[9px]" />
            <Sel className="ml-[4px] w-[56px] pl-[2px]">不偏移</Sel>
            <Arrow className="-ml-[9px]" />
            <Sep className="ml-[8px]" />
            <span className={clsx("ml-[1px] w-[15px] text-[#a8a89c]", mono)}>X=</span>
            <Spin value="0" className="w-[57px]" />
            <span className={clsx("ml-[1px] w-[20px] text-[#a8a89c]", mono)}>mm</span>
            <span className={clsx("w-[14px] text-[#a8a89c]", mono)}>Y=</span>
            <Spin value="0" className="w-[58px]" />
            <span className={clsx("ml-[1px] w-[15px] text-[#a8a89c]", mono)}>mm</span>
            <Sep />
            <div className="ml-[3px] w-[11px] h-[11px] border border-[#a8a89c] bg-[#f8f8f4] shrink-0" />
            <span className="ml-[9px] shrink-0">旋转</span>
            <Spin value="0.000" className="ml-[4px] w-[68px]" />
            <span className="ml-[2px] text-[#888]">°</span>
          </div>
        </div>

        {/* rebar panel */}
        <div className="flex flex-1 min-h-0">
          <div className="flex flex-col items-center w-[12px] shrink-0">
            <div className="flex items-center justify-center w-[8px] h-[8px] mt-[2px] ml-[1px] bg-[#d8423a] rounded-[1px] text-white text-[8px]">×</div>
            <div className="w-[2px] flex-1 mt-[2px] border-l-2 border-dotted border-[#b9b8a8]" />
          </div>
          <div className="flex flex-col w-[984px] shrink-0">
            <div className="flex items-center h-[26px] bg-[#f5f4ec]">
              <svg width="10" height="12" viewBox="0 0 10 12" className="ml-[6px] shrink-0"><path d="M0 1h2v10H0zM9 1v10L3 6z" fill="#c2c2ba" /></svg>
              <svg width="6" height="12" viewBox="0 0 6 12" className="ml-[16px] shrink-0"><path d="M6 1v10L0 6z" fill="#c2c2ba" /></svg>
              <svg width="7" height="12" viewBox="0 0 7 12" className="ml-[18px] shrink-0"><path d="M0 1v10l7-5z" fill="#2f74c0" /></svg>
              <svg width="10" height="12" viewBox="0 0 10 12" className="ml-[16px] shrink-0"><path d="M0 1v10l7-5zM8 1h2v10H8z" fill="#2f74c0" /></svg>
              <Sep className="ml-[8px]" />
              <svg width="8" height="10" viewBox="0 0 8 10" className="ml-[9px] shrink-0"><path d="M4 0l4 5H6v5H2V5H0z" fill="#c2c2ba" /></svg>
              <svg width="8" height="10" viewBox="0 0 8 10" className="ml-[14px] shrink-0"><path d="M4 10l4-5H6V0H2v5H0z" fill="#2f74c0" /></svg>
              <Sep className="ml-[8px]" />
              <T i="insert" grey className="ml-[5px]">插入</T>
              <T i="remove" grey className="ml-[6px]">删除</T>
              <T i="scale" className="ml-[6px]">缩尺配筋</T>
              <T i="info" className="ml-[7px]">钢筋信息</T>
              <T i="lib" className="ml-[8px]">钢筋图库</T>
              <T i="other" className="ml-[7px]">其他</T>
              <Arrow className="ml-[3px]" />
              <span className="ml-[8px] shrink-0">关闭</span>
              <Sep className="ml-[8px]" />
              <span className="ml-[8px] shrink-0 whitespace-nowrap">单构件钢筋总重<span className={mono}>(kg)</span>：<span className={mono}>140.385</span></span>
            </div>
            <div className="w-[984px] h-[174px] overflow-hidden border-t border-l border-[#9fb0c0] border-b-2 border-b-[#8fa4b8]">
              <table className="table-fixed border-collapse w-[1001px]">
                <colgroup>
                  {cols.map((c, i) => <col key={i} style={{ width: c }} />)}
                </colgroup>
                <thead>
                  <tr className="h-[19px] bg-[#f1f0e5]">
                    {headers.map((h, i) => (
                      <th key={i} className={clsx("border-x border-[#c8c7ba] font-normal text-center p-0 whitespace-nowrap", i === 2 && "bg-[#f9c983] text-[#a81818]")}>{h}</th>
                    ))}
                  </tr>
                </thead>
                <tbody className="bg-[#c6fbcf]">
                  {rows.map((r, i) => (
                    <tr key={r.id} className={r.h}>
                      <td className={clsx(td, "text-center", mono, i === 0 ? "bg-[#fcc97c]" : "bg-[#f1f0e5]")}>{r.id}</td>
                      <td className={clsx(td, "pl-[2px] leading-[13px] border-r-2 border-r-black")}>{r.name}</td>
                      <td className={clsx(td, mono, "pl-[2px]", i === 0 && "bg-[#b2e8d0]")}>{r.dia}</td>
                      <td className={clsx(td, "text-center text-[11px]")}>虫</td>
                      <td className={clsx(td, mono, "pl-[2px]")}>{r.code}</td>
                      <td className={td}>{r.shape}</td>
                      <td className={clsx(td, mono, "pl-[2px] leading-[13px]")}>{r.calc}</td>
                      <td className={clsx(td, "pl-[2px]")}>{r.desc}</td>
                      <td className={clsx(td, mono, "pl-[2px]")}>{r.total}</td>
                      <td className={clsx(td, mono, "pl-[2px]")}>{r.n}</td>
                      <td className={clsx(td, mono, "pl-[2px]")}>0</td>
                      <td className={clsx(td, mono, "pl-[2px]")}>3</td>
                      <td className={clsx(td, mono, "pl-[2px]")}>{r.unit}</td>
                    </tr>
                  ))}
                </tbody>
              </table>
            </div>
          </div>
        </div>
      </div>
    </div>

    {/* red ring around the member name */}
    <svg width="60" height="28" viewBox="0 0 60 28" className="absolute top-[54px] left-[216px] pointer-events-none">
      <ellipse cx="29" cy="13" rx="27" ry="12" fill="none" stroke="#d02020" strokeWidth="1.200" />
    </svg>
    <Notes />
  </div>
);

export default App;
